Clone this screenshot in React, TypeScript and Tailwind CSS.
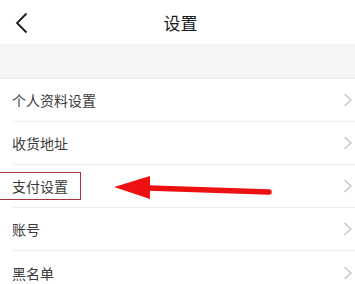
import React from "react";

const rows = ["个人资料设置", "收货地址", "支付设置", "账号", "黑名单"];

function Chevron() {
  return (
    <svg width="10" height="14" viewBox="0 0 10 14" className="shrink-0">
      <path d="M1.5 1 L8 7 L1.5 13" fill="none" stroke="#c4c4c4" strokeWidth="1.3" />
    </svg>
  );
}

export default function App() {
  return (
    <div
      className="relative w-[355px] h-[284px] overflow-hidden bg-white"
      style={{ fontFamily: '"Noto Sans CJK SC", "Noto Sans", sans-serif' }}
    >
      <div className="relative h-[44px] flex items-center justify-center bg-white">
        <svg width="14" height="22" viewBox="0 0 14 22" className="absolute left-[15px] top-[12px]">
          <path d="M11.5 1.5 L2 11 L11.5 20.5" fill="none" stroke="#1a1a1a" strokeWidth="1.8" />
        </svg>
        <span className="ml-[6px] text-[17px] text-[#1a1a1a] leading-none">设置</span>
      </div>
      <div className="h-[35px] bg-[#f4f5f7] border-b border-[#ececec]" />
      <div className="flex flex-col">
        {rows.map((r, i) => (
          <div key={r} className="pl-[12px]">
            <div
              className={`h-[43px] flex items-center justify-between pr-[2px] ${
                i < rows.length - 1 ? "border-b border-[#eeeeee]" : ""
              }`}
            >
              <span className="text-[14px] text-[#3a3a3a] leading-none">{r}</span>
              <Chevron />
            </div>
          </div>
        ))}
      </div>
      <div className="absolute left-[-1px] top-[172px] w-[82px] h-[28px] border border-[#a8323e]" />
      <svg
        className="absolute left-0 top-0"
        width="355"
        height="284"
        viewBox="0 0 355 284"
      >
        <line x1="148" y1="188" x2="269" y2="192" stroke="#ee1111" strokeWidth="5.5" strokeLinecap="round" />
        <polygon points="114,187 150,176 150,199" fill="#ee1111" />
      </svg>
    </div>
  );
}
